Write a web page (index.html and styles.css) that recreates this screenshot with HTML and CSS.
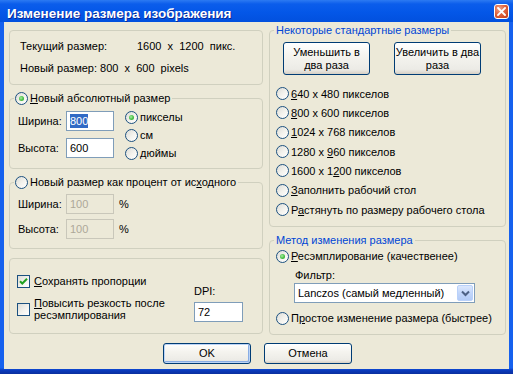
FILE: index.html
```html
<!DOCTYPE html>
<html lang="ru">
<head>
<meta charset="utf-8">
<title>Изменение размера изображения</title>
<link rel="stylesheet" href="styles.css">
</head>
<body>
<div class="window">
  <div class="titlebar">
    <span class="title">Изменение размера изображения</span>
    <span class="close"><svg width="9" height="9" viewBox="0 0 9 9"><path d="M1 1 L8 8 M8 1 L1 8" stroke="#fff" stroke-width="1.8" stroke-linecap="square"/></svg></span>
  </div>
  <div class="client">
    <div class="columns">
      <div class="col col-left">
        <div class="group g-info">
          <div class="info-line"><span class="info-label">Текущий размер:</span><span class="pre">1600  x  1200  пикс.</span></div>
          <div class="info-line second pre">Новый размер: 800  x  600  pixels</div>
        </div>

        <div class="group g-abs">
          <div class="legend"><span class="radio checked"></span><span><u>Н</u>овый абсолютный размер</span></div>
          <div class="abs-body">
            <div class="fields abs-fields">
              <div class="field-row"><span class="field-label">Ширина:</span><div class="input"><span class="sel">800</span></div></div>
              <div class="field-row abs-second"><span class="field-label">Высота:</span><div class="input">600</div></div>
            </div>
            <div class="units">
              <div class="opt unit"><span class="radio checked"></span>пикселы</div>
              <div class="opt unit"><span class="radio"></span>см</div>
              <div class="opt unit"><span class="radio"></span>дюймы</div>
            </div>
          </div>
        </div>

        <div class="group g-pct">
          <div class="legend"><span class="radio"></span><span>Новый размер как процент от ис<u>х</u>одного</span></div>
          <div class="fields pct-fields">
            <div class="field-row"><span class="field-label">Ширина:</span><div class="input disabled">100</div><span class="pct">%</span></div>
            <div class="field-row pct-second"><span class="field-label">Высота:</span><div class="input disabled">100</div><span class="pct">%</span></div>
          </div>
        </div>

        <div class="group g-opts">
          <div class="checks">
            <div class="check-row"><span class="checkbox checked"><svg width="11" height="11" viewBox="0 0 11 11"><path d="M2 5.2 L4.3 7.5 L9 2.8" fill="none" stroke="#21A121" stroke-width="2"/></svg></span><span><u>С</u>охранять пропорции</span></div>
            <div class="check-row two-line"><span class="checkbox"></span><span class="two-text"><u>П</u>овысить резкость после<br>ресэмплирования</span></div>
          </div>
          <div class="dpi">
            <div class="dpi-label">DPI:</div>
            <div class="input dpi-input">72</div>
          </div>
        </div>
      </div>

      <div class="col col-right">
        <div class="group g-std">
          <div class="legend blue">Некоторые стандартные размеры</div>
          <div class="std-buttons">
            <button class="btn std">Уменьшить в<br>два раза</button>
            <button class="btn std">Увеличить в два<br>раза</button>
          </div>
          <div class="size-list">
            <div class="opt"><span class="radio"></span><span><u>6</u>40 x 480 пикселов</span></div>
            <div class="opt"><span class="radio"></span><span><u>8</u>00 x 600 пикселов</span></div>
            <div class="opt"><span class="radio"></span><span><u>1</u>024 x 768 пикселов</span></div>
            <div class="opt"><span class="radio"></span><span>1280 x <u>9</u>60 пикселов</span></div>
            <div class="opt"><span class="radio"></span><span>1600 x 1<u>2</u>00 пикселов</span></div>
            <div class="opt"><span class="radio"></span><span><u>З</u>аполнить рабочий стол</span></div>
            <div class="opt"><span class="radio"></span><span>Р<u>а</u>стянуть по размеру рабочего стола</span></div>
          </div>
        </div>

        <div class="group g-method">
          <div class="legend blue">Метод изменения размера</div>
          <div class="opt method-first"><span class="radio checked"></span><span><u>Р</u>есэмплирование (качественее)</span></div>
          <div class="filter-label">Фильтр:</div>
          <div class="select">
            <span class="select-text">Lanczos (самый медленный)</span>
            <span class="drop"><svg width="9" height="7" viewBox="0 0 9 7"><path d="M1 1.5 L4.5 5 L8 1.5" fill="none" stroke="#4D6185" stroke-width="2"/></svg></span>
          </div>
          <div class="opt method-second"><span class="radio"></span><span>П<u>р</u>остое изменение размера (быстрее)</span></div>
        </div>
      </div>
    </div>

    <div class="actions">
      <button class="btn action default">OK</button>
      <button class="btn action">Отмена</button>
    </div>
  </div>
</div>
</body>
</html>
```

FILE: styles.css
```css
* { box-sizing: border-box; }

html, body {
  margin: 0;
  padding: 0;
}

body {
  width: 513px;
  height: 374px;
  overflow: hidden;
  font-family: "Liberation Sans", Arial, sans-serif;
  font-size: 11px;
  color: #000;
  background: #0A53E4;
}

u { text-decoration: underline; text-underline-offset: 1px; }

.window {
  width: 513px;
  height: 374px;
  display: flex;
  flex-direction: column;
  background: linear-gradient(180deg, #1661EE 0, #1661EE 368px, #0A3CC0 370px, #0A2F9E 374px);
}

.titlebar {
  height: 22px;
  flex: none;
  display: flex;
  align-items: flex-start;
  justify-content: space-between;
  padding: 0 4px 0 7px;
  background: linear-gradient(180deg, #2C7AF2 0, #0B5DEB 4px, #0457E8 55%, #0250DE 100%);
}

.title {
  margin-top: 6px;
  font-weight: bold;
  font-size: 13.5px;
  line-height: 16px;
  color: #fff;
  text-shadow: 1px 1px 0 #0A2A96;
  white-space: nowrap;
}

.close {
  margin-top: 4px;
  width: 15px;
  height: 15px;
  border: 1px solid #fff;
  border-radius: 3px;
  background: radial-gradient(circle at 35% 30%, #F1A58B 0, #E0643F 45%, #C43B14 100%);
  display: flex;
  align-items: center;
  justify-content: center;
}

.client {
  flex: 1;
  margin: 0 4px 5px 4px;
  background: #ECE9D8;
  padding: 8px 3px 0 5px;
  display: flex;
  flex-direction: column;
}

.columns {
  display: flex;
  gap: 6px;
  align-items: flex-start;
}

.col {
  display: flex;
  flex-direction: column;
}

.col-left { width: 254px; }
.col-right { width: 237px; }

.group {
  display: flex;
  flex-direction: column;
  border: 1px solid #D0D0BF;
  border-radius: 4px;
}

.legend {
  display: flex;
  align-items: center;
  align-self: flex-start;
  height: 14px;
  line-height: 14px;
  margin-top: -8px;
  margin-left: 4px;
  padding: 0 2px 0 1px;
  background: #ECE9D8;
  white-space: nowrap;
}

.legend.blue {
  color: #0046D5;
  padding: 0 2px 0 2px;
}

.pre { white-space: pre; }

/* info group */
.g-info {
  height: 55px;
  padding: 8px 0 0 10px;
}

.info-line {
  line-height: 14px;
  display: flex;
}

.info-line.second { margin-top: 8px; }

.info-label { width: 117px; }

/* absolute size */
.g-abs {
  margin-top: 13px;
  height: 71px;
}

.abs-body {
  display: flex;
  align-items: flex-start;
  padding-left: 8px;
}

.abs-fields { margin-top: 6px; }
.abs-second { margin-top: 7px; }

.field-row {
  display: flex;
  align-items: center;
  height: 20px;
}

.field-label { width: 48px; }

.input {
  width: 48px;
  height: 20px;
  border: 1px solid #7F9DB9;
  background: #fff;
  padding-left: 3px;
  line-height: 18px;
}

.input .sel {
  background: #316AC5;
  color: #fff;
  display: inline-block;
  line-height: 14px;
}

.input.disabled {
  background: #ECE9D8;
  border-color: #C9C7BA;
  color: #ACA899;
}

.units {
  margin-top: 3px;
  margin-left: 11px;
}

.opt {
  display: flex;
  align-items: center;
  white-space: nowrap;
}

.unit { height: 18px; }

.radio {
  display: inline-grid;
  place-items: center;
  flex: none;
  width: 13px;
  height: 13px;
  margin-right: 2px;
  border: 1px solid #1C5180;
  border-radius: 50%;
  background: linear-gradient(135deg, #DCDCD7 0, #F4F3EE 55%, #FFFFFF 100%);
}

.radio.checked::after {
  content: "";
  width: 5px;
  height: 5px;
  border-radius: 50%;
  background: radial-gradient(circle at 40% 40%, #A9EFA4 0, #4DC24A 50%, #21A121 100%);
}

/* percent group */
.g-pct {
  margin-top: 13px;
  height: 67px;
}

.pct-fields {
  padding-left: 8px;
  margin-top: 5px;
}

.pct-second { margin-top: 5px; }

.pct { margin-left: 5px; }

/* options group */
.g-opts {
  margin-top: 9px;
  height: 76px;
  flex-direction: row;
  align-items: flex-start;
  padding: 15px 0 0 7px;
}

.checks { width: 177px; }

.check-row {
  display: flex;
  align-items: center;
  height: 14px;
}

.check-row.two-line {
  height: 24px;
  margin-top: 9px;
}

.two-text { line-height: 12px; }

.checkbox {
  display: inline-grid;
  place-items: center;
  flex: none;
  width: 13px;
  height: 13px;
  margin-right: 4px;
  border: 1px solid #1C5180;
  background: linear-gradient(135deg, #DCDCD7 0, #F4F3EE 55%, #FFFFFF 100%);
}

.dpi { margin-top: 10px; }

.dpi-label { line-height: 14px; }

.dpi-input {
  margin-top: 4px;
  width: 49px;
}

/* standard sizes */
.g-std {
  height: 197px;
}

.std-buttons {
  display: flex;
  gap: 24px;
  padding-left: 13px;
  margin-top: 5px;
}

.btn {
  font-family: "Liberation Sans", Arial, sans-serif;
  font-size: 11px;
  color: #000;
  border: 1px solid #003C74;
  border-radius: 3px;
  background: linear-gradient(180deg, #FFFFFF 0, #F5F4EF 40%, #ECEBE6 85%, #D6D0C5 100%);
  padding: 0;
  margin: 0;
  line-height: 13px;
}

.btn.std {
  width: 87px;
  height: 33px;
}

.size-list {
  display: grid;
  grid-auto-rows: 19.33px;
  margin-top: 9px;
  padding-left: 6px;
}

/* method */
.g-method {
  margin-top: 13px;
  height: 95px;
}

.method-first {
  height: 14px;
  margin-top: 2px;
  padding-left: 6px;
}

.filter-label {
  line-height: 14px;
  margin-top: 5px;
  padding-left: 25px;
}

.select {
  display: flex;
  align-items: center;
  width: 181px;
  height: 20px;
  margin-top: 1px;
  margin-left: 24px;
  border: 1px solid #7F9DB9;
  background: #fff;
}

.select-text {
  flex: 1;
  padding-left: 3px;
  white-space: nowrap;
}

.drop {
  width: 16px;
  height: 16px;
  margin-right: 1px;
  border-radius: 2px;
  border: 1px solid #B9D1FA;
  background: linear-gradient(180deg, #DCE8FD 0, #C2D6FA 50%, #B3CBF7 100%);
  display: flex;
  align-items: center;
  justify-content: center;
}

.method-second {
  height: 14px;
  margin-top: 8px;
  padding-left: 6px;
}

/* dialog buttons */
.actions {
  display: flex;
  justify-content: center;
  gap: 13px;
  margin-top: 8px;
}

.btn.action {
  width: 88px;
  height: 21px;
}

.btn.default {
  box-shadow: inset 0 0 0 1px #BCD4F6, inset -1px -1px 0 1px #89ADE4;
}
```
